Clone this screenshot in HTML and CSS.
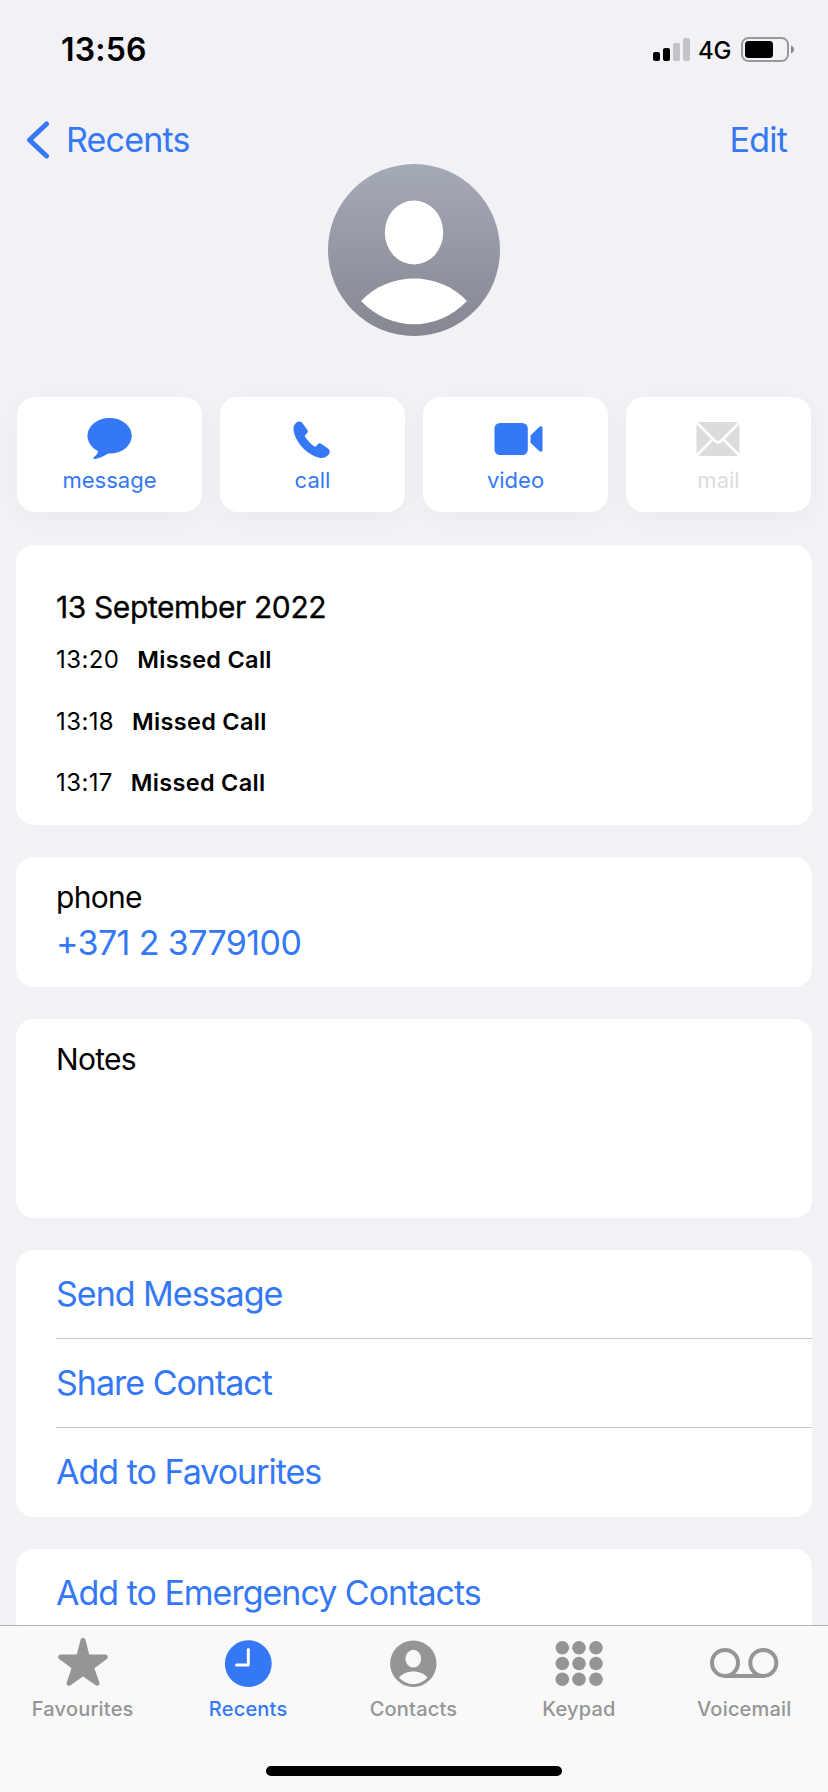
FILE: index.html
```
<!DOCTYPE html>
<html lang="en">
<head>
    <meta charset="UTF-8">
    <meta name="viewport" content="width=device-width, initial-scale=1.0">
    <title>Recents</title>
    <link rel="stylesheet" href="styles.css">
</head>
<body>
    <header class="status-bar">
        <span class="time">13:56</span>
        <div class="status-icons">
            <svg class="signal" width="38" height="24" viewBox="0 0 38 24">
                <rect x="0" y="14" width="7" height="9" rx="2"/>
                <rect x="10" y="10" width="7" height="13" rx="2"/>
                <rect class="weak" x="20" y="5" width="7" height="18" rx="2"/>
                <rect class="weak" x="30" y="0" width="7" height="23" rx="2"/>
            </svg>
            <span class="network">4G</span>
            <svg class="battery" width="54" height="25" viewBox="0 0 54 25">
                <rect x="1" y="1" width="46" height="23" rx="6.5" fill="none" stroke="#98989c" stroke-width="2"/>
                <rect x="4" y="4" width="28" height="17" rx="3.5"/>
                <path d="M50 8.5c4 1.5 4 6.5 0 8z" fill="#88888c"/>
            </svg>
        </div>
    </header>

    <nav class="nav-bar">
        <a class="back">
            <svg width="24" height="38" viewBox="0 0 24 38"><path d="M21.5 3L4.5 19L21.5 35"/></svg>
            <span>Recents</span>
        </a>
        <a class="edit">Edit</a>
    </nav>

    <main class="contact">
        <svg class="avatar" width="172" height="172" viewBox="0 0 172 172">
            <defs>
                <linearGradient id="avatarFill" x1="0" y1="0" x2="0" y2="1">
                    <stop offset="0" stop-color="#a5aab7"/>
                    <stop offset="1" stop-color="#858791"/>
                </linearGradient>
            </defs>
            <circle cx="86" cy="86" r="86" fill="url(#avatarFill)"/>
            <ellipse cx="86" cy="68.5" rx="29.2" ry="32" fill="#fff"/>
            <path d="M33 137C61 107 111 107 139 137C109 168 63 168 33 137z" fill="#fff"/>
        </svg>

        <div class="actions">
            <a class="action">
                <svg width="60" height="46" viewBox="0 0 60 46">
                    <ellipse cx="29.6" cy="20.8" rx="22.2" ry="17.8"/>
                    <path d="M18.5 35C18 38 16.5 40 14 42C12.8 43.5 13.5 44.3 15 44C19 43.5 24 41 28.5 38.3z"/>
                </svg>
                <span>message</span>
            </a>
            <a class="action">
                <svg width="60" height="46" viewBox="0 0 60 46">
                    <path d="M13.5 7.5C15.7 5.9 18.2 6.5 19.7 8.5L24.2 14.7C25.3 16.3 25 17.5 23.8 18.6L22.5 19.7C21.7 20.4 21.7 21.2 22.2 22C24.4 25.6 27.5 28.8 31 31.2C31.9 31.8 32.7 31.7 33.4 30.9L34.6 29.5C35.7 28.2 37 28 38.5 29L45 33.5C47 34.9 47.3 37.2 45.8 39.3C43.6 42.3 40.6 43.6 36.8 42.8C25 40.3 13 28.5 10.7 16C10 12.3 10.7 9.5 13.5 7.5z"/>
                </svg>
                <span>call</span>
            </a>
            <a class="action">
                <svg width="60" height="46" viewBox="0 0 60 46">
                    <rect x="8.5" y="8" width="33.3" height="32" rx="5.5"/>
                    <path d="M44.5 20.5L53 12.3C54.8 10.7 56.5 11 56.5 13V35C56.5 37 54.8 37.3 53 35.7L44.5 27.7z"/>
                </svg>
                <span>video</span>
            </a>
            <a class="action disabled">
                <svg width="60" height="46" viewBox="0 0 60 46">
                    <rect x="7.5" y="7" width="43" height="34" rx="3"/>
                    <path class="fold" d="M7 7L25.5 25.5Q29 29 32.5 25.5L51 7M7 41L23 25M51 41L35 25"/>
                </svg>
                <span>mail</span>
            </a>
        </div>

        <section class="card calls">
            <h1>13 September 2022</h1>
            <div class="call-row"><time>13:20</time><b>Missed Call</b></div>
            <div class="call-row"><time>13:18</time><b>Missed Call</b></div>
            <div class="call-row"><time>13:17</time><b>Missed Call</b></div>
        </section>

        <section class="card phone">
            <div class="label">phone</div>
            <a class="number">+371 2 3779100</a>
        </section>

        <section class="card notes">
            <div class="label">Notes</div>
        </section>

        <section class="card links">
            <a class="link">Send Message</a>
            <a class="link">Share Contact</a>
            <a class="link">Add to Favourites</a>
        </section>

        <section class="card links">
            <a class="link">Add to Emergency Contacts</a>
        </section>
    </main>

    <footer class="tab-bar">
        <div class="tabs">
            <a class="tab">
                <svg width="80" height="56" viewBox="0 0 80 56">
                    <path d="M40 8.3L44.3 24.9H62.3L48.5 35.3L54 51.2L40 41.5L26 51.2L31.5 35.3L17.7 24.9H35.7z" stroke="currentColor" stroke-width="5" stroke-linejoin="round"/>
                </svg>
                <span>Favourites</span>
            </a>
            <a class="tab active">
                <svg width="80" height="56" viewBox="0 0 80 56">
                    <circle cx="40.3" cy="31.7" r="23.4"/>
                    <path d="M40.3 17.5V33H28.5" fill="none" stroke="#fff" stroke-width="3" stroke-linecap="round" stroke-linejoin="round"/>
                </svg>
                <span>Recents</span>
            </a>
            <a class="tab">
                <svg width="80" height="56" viewBox="0 0 80 56">
                    <circle cx="39.3" cy="31.7" r="23.2"/>
                    <ellipse cx="39.3" cy="26.7" rx="7.9" ry="8.9" fill="#f9f9fa"/>
                    <path d="M25 45.5C32 37.5 46.6 37.5 53.6 45.5C45 54.5 33.5 54.5 25 45.5z" fill="#f9f9fa"/>
                </svg>
                <span>Contacts</span>
            </a>
            <a class="tab">
                <svg width="80" height="56" viewBox="0 0 80 56">
                    <circle cx="23.3" cy="15.7" r="6.8"/><circle cx="40" cy="15.7" r="6.8"/><circle cx="57" cy="15.7" r="6.8"/>
                    <circle cx="23.3" cy="31.5" r="6.8"/><circle cx="40" cy="31.5" r="6.8"/><circle cx="57" cy="31.5" r="6.8"/>
                    <circle cx="23.3" cy="47.3" r="6.8"/><circle cx="40" cy="47.3" r="6.8"/><circle cx="57" cy="47.3" r="6.8"/>
                </svg>
                <span>Keypad</span>
            </a>
            <a class="tab">
                <svg width="80" height="56" viewBox="0 0 80 56">
                    <g fill="none" stroke="currentColor" stroke-width="4">
                        <circle cx="21" cy="30.9" r="13"/>
                        <circle cx="59.3" cy="30.9" r="13"/>
                        <path d="M21 43.9H59.3"/>
                    </g>
                </svg>
                <span>Voicemail</span>
            </a>
        </div>
        <div class="home-indicator"></div>
    </footer>
</body>
</html>
```
FILE: styles.css
```
* { box-sizing: border-box; }
body {
    margin: 0;
    height: 1792px;
    display: flex;
    flex-direction: column;
    overflow: hidden;
    background: #f1f1f6;
    color: #000;
    font-family: Inter, "Liberation Sans", sans-serif;
}
svg { display: block; fill: currentColor; }

.status-bar {
    display: flex;
    flex: none;
    justify-content: space-between;
    align-items: center;
    height: 99px;
    padding: 0 33px 0 61px;
}
.time { font-size: 32px; font-weight: 600; letter-spacing: 0.2px; }
.status-icons { display: flex; align-items: center; }
.signal .weak { fill: #c3c3c8; }
.network { margin: 1px 10px 0 7px; font-size: 24px; font-weight: 500; letter-spacing: -0.4px; }

.nav-bar {
    display: flex;
    flex: none;
    justify-content: space-between;
    align-items: flex-start;
    height: 65px;
    padding: 21px 41px 0 25px;
    color: #3478f6;
    font-size: 34px;
    line-height: 40px;
    letter-spacing: -0.8px;
}
.back { display: flex; align-items: center; gap: 17px; height: 40px; }
.back path {
    fill: none;
    stroke: currentColor;
    stroke-width: 5;
    stroke-linecap: round;
    stroke-linejoin: round;
}

.contact {
    display: flex;
    flex: 1;
    flex-direction: column;
    min-height: 0;
    overflow: hidden;
}
.avatar { flex: none; align-self: center; }

.actions {
    display: grid;
    flex: none;
    grid-template-columns: repeat(4, 1fr);
    gap: 18px;
    margin: 61px 17px 33px;
}
.action {
    display: flex;
    flex-direction: column;
    align-items: center;
    gap: 6px;
    height: 115px;
    padding-top: 18px;
    border-radius: 18px;
    background: #fff;
    box-shadow: 0 6px 24px rgba(0, 0, 0, 0.035);
    color: #3478f6;
    font-size: 22px;
    line-height: 26px;
    letter-spacing: 0;
}
.action.disabled { color: #dcdcde; }
.fold { fill: none; stroke: #fff; stroke-width: 2.5; }

.card {
    flex: none;
    margin: 0 16px 32px;
    padding-left: 40px;
    border-radius: 18px;
    background: #fff;
}
.calls { height: 280px; padding-top: 43px; }
.calls h1 {
    margin: 0 0 1px;
    font-size: 30px;
    font-weight: 400;
    line-height: 38px;
    letter-spacing: -0.4px;
    -webkit-text-stroke: 0.3px;
}
.call-row {
    display: flex;
    gap: 18px;
    height: 61.5px;
    font-size: 24px;
    line-height: 66px;
    letter-spacing: 0.4px;
}
.call-row b { font-size: 23.5px; font-weight: 600; letter-spacing: 0.3px; }

.phone { height: 130px; padding-top: 21px; }
.label { font-size: 30px; line-height: 38px; letter-spacing: -0.7px; }
.number {
    display: block;
    color: #3478f6;
    font-size: 34px;
    line-height: 54px;
    letter-spacing: -0.6px;
}
.notes { height: 199px; padding-top: 21px; }

.link {
    display: block;
    height: 89px;
    border-bottom: 1px solid #c6c6c8;
    color: #3478f6;
    font-size: 34px;
    line-height: 88px;
    letter-spacing: -1px;
}
.link:last-child { border-bottom: 0; }

.tab-bar {
    display: flex;
    flex: none;
    flex-direction: column;
    align-items: center;
    height: 167px;
    border-top: 1px solid #b0b0b3;
    background: #f9f9fa;
}
.tabs {
    display: flex;
    width: 100%;
    height: 140px;
    padding: 6px 1px 0 0;
}
.tab {
    display: flex;
    flex: 1;
    flex-direction: column;
    align-items: center;
    gap: 9px;
    color: #959595;
    font-size: 20px;
    font-weight: 500;
    line-height: 24px;
    letter-spacing: 0.2px;
}
.tab.active { color: #3478f6; }
.home-indicator { width: 296px; height: 10px; border-radius: 5px; background: #000; }
```
